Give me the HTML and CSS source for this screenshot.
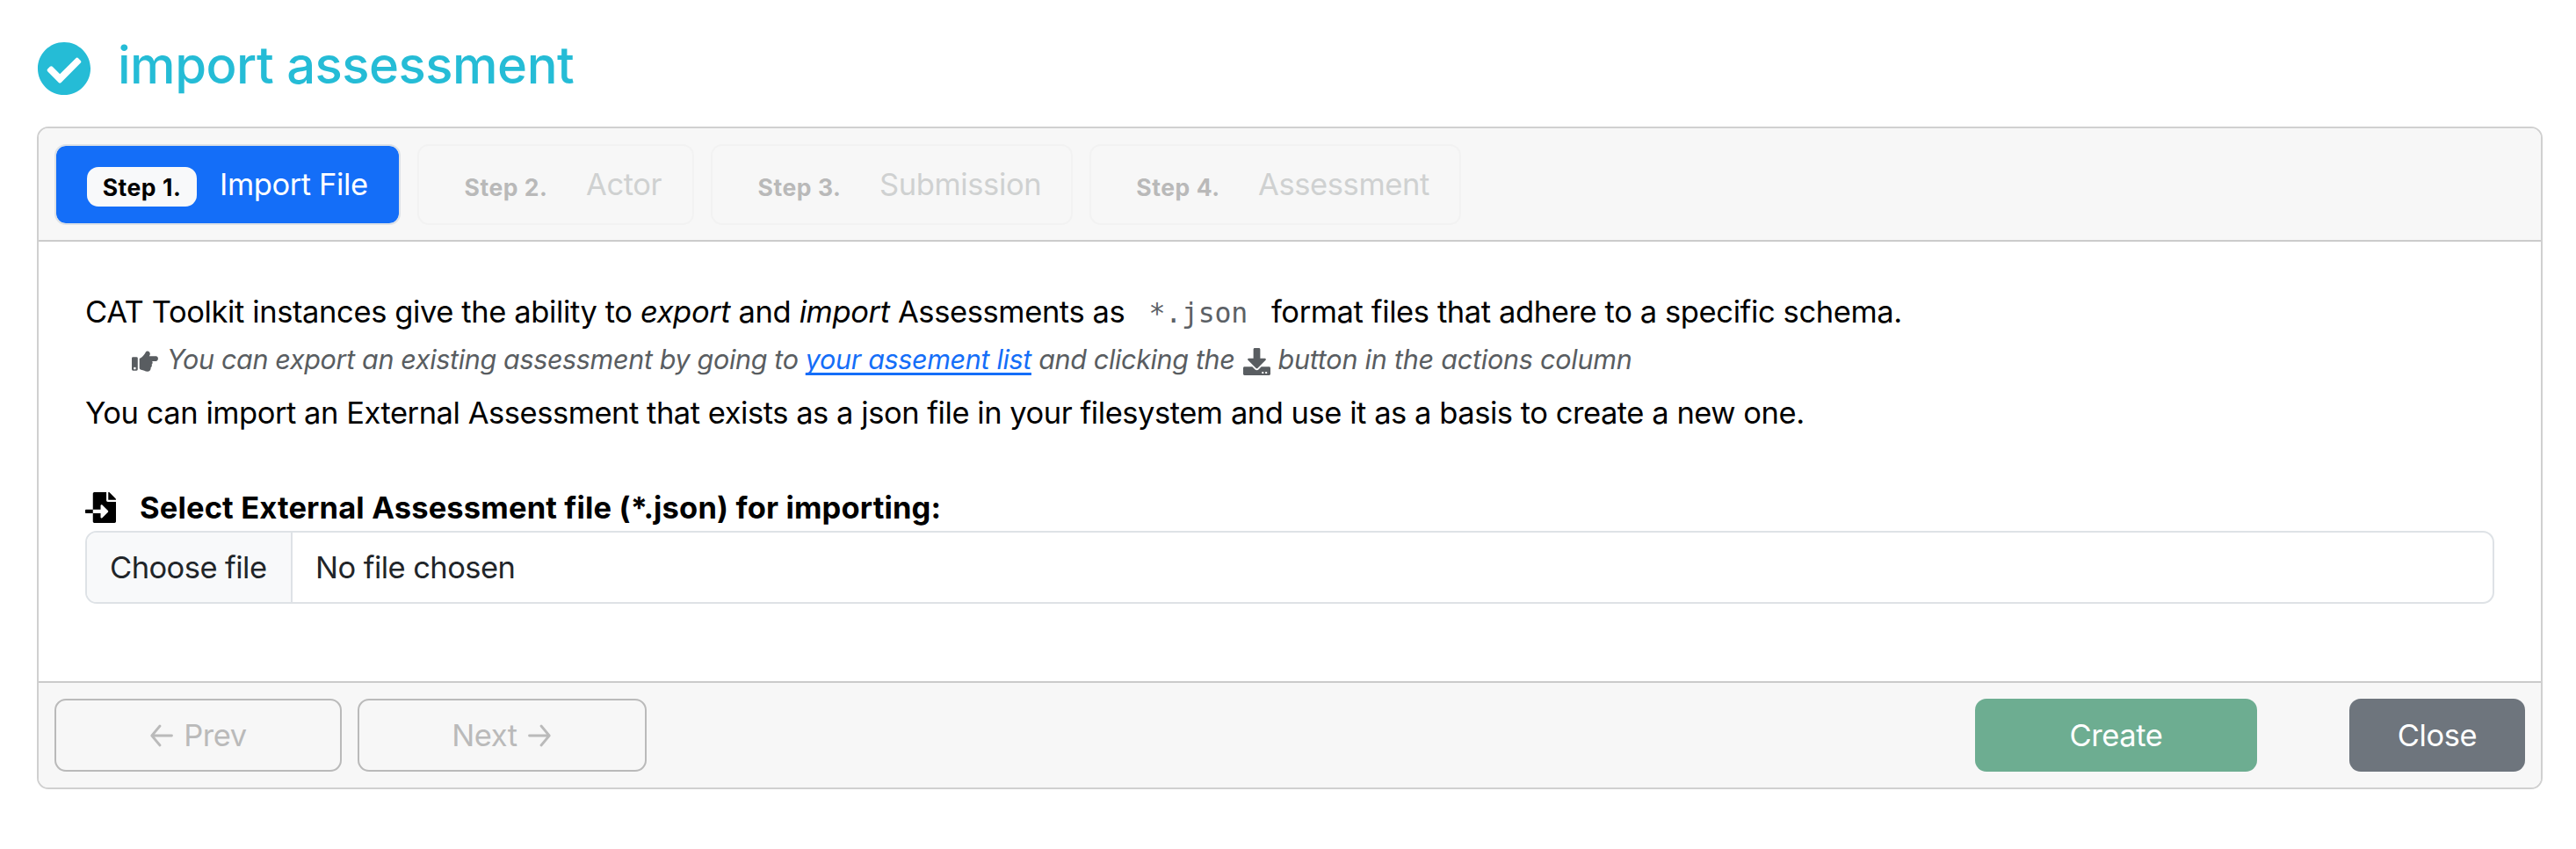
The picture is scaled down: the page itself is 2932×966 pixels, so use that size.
FILE: index.html
```html
<!DOCTYPE html>
<html lang="en">
<head>
<meta charset="utf-8">
<title>Import assessment</title>
<link rel="stylesheet" href="styles.css">
</head>
<body>
<main class="page">
  <h1 class="title">
    <svg class="title-icon" viewBox="0 0 512 512"><path fill="currentColor" d="M504 256c0 136.967-111.033 248-248 248S8 392.967 8 256 119.033 8 256 8s248 111.033 248 248zM227.314 387.314l184-184c6.248-6.248 6.248-16.379 0-22.627l-22.627-22.627c-6.248-6.249-16.379-6.249-22.628 0L216 308.118l-70.059-70.059c-6.248-6.248-16.379-6.248-22.628 0l-22.627 22.627c-6.248 6.248-6.248 16.379 0 22.627l104 104c6.249 6.249 16.379 6.249 22.628.001z"/></svg>
    <span class="title-text">import assessment</span>
  </h1>
  <section class="card">
    <nav class="card-header">
      <div class="tab tab-1 active"><span class="badge">Step 1.</span><span class="tab-name">Import File</span></div>
      <div class="tab tab-2"><span class="badge">Step 2.</span><span class="tab-name">Actor</span></div>
      <div class="tab tab-3"><span class="badge">Step 3.</span><span class="tab-name">Submission</span></div>
      <div class="tab tab-4"><span class="badge">Step 4.</span><span class="tab-name">Assessment</span></div>
    </nav>
    <div class="card-body">
      <p class="line"><span>CAT Toolkit instances give the ability to <em>export</em> and <em>import</em> Assessments as</span><code class="code">*.json</code><span>format files that adhere to a specific schema.</span></p>
      <p class="hint">
        <svg class="hand-icon" viewBox="0 0 512 384"><path fill="currentColor" fill-rule="evenodd" d="M24 112h64a24 24 0 0 1 24 24v208a24 24 0 0 1-24 24H24a24 24 0 0 1-24-24V136a24 24 0 0 1 24-24zm32 192a22 22 0 1 0 0 44 22 22 0 0 0 0-44zM144 142c34-12 62-42 88-75 24-31 32-67 62-67 31 0 50 22 50 55 0 14-7 28-18 43h137a49 49 0 0 1 0 92h-80c14 20 10 50-9 65 10 22 2 46-17 58 6 36-16 71-56 71-58 0-75-28-125-32-18-1-32-12-32-30z"/></svg>
        <span>You can export an existing assessment by going to <a class="link" href="#">your assement list</a> and clicking the</span>
        <svg class="download-icon" viewBox="0 0 512 512"><path fill="currentColor" d="M216 0h80c13.300 0 24 10.700 24 24v168h87.700c17.800 0 26.700 21.500 14.100 34.100L269.700 378.300c-7.500 7.500-19.800 7.500-27.300 0L90.100 226.100c-12.600-12.600-3.700-34.100 14.100-34.100H192V24c0-13.300 10.700-24 24-24zm296 376v112c0 13.300-10.700 24-24 24H24c-13.300 0-24-10.700-24-24V376c0-13.300 10.700-24 24-24h146.700l49 49c20.100 20.100 52.500 20.100 72.600 0l49-49H488c13.300 0 24 10.700 24 24zm-124 88c0-11-9-20-20-20s-20 9-20 20 9 20 20 20 20-9 20-20zm64 0c0-11-9-20-20-20s-20 9-20 20 9 20 20 20 20-9 20-20z"/></svg>
        <span class="hint-end">button in the actions column</span>
      </p>
      <p class="line line-last">You can import an External Assessment that exists as a json file in your filesystem and use it as a basis to create a new one.</p>
      <div class="label">
        <svg class="import-icon" viewBox="0 0 512 512"><path fill="currentColor" d="M16 288c-8.800 0-16 7.200-16 16v32c0 8.800 7.200 16 16 16h112v-64zm489-183L407.100 7c-4.500-4.500-10.600-7-17-7H384v128h128v-6.100c0-6.300-2.500-12.400-7-16.900zm-153 31V0H152c-13.300 0-24 10.700-24 24v264h128v-65.200c0-14.300 17.300-21.400 27.400-11.300L379 308c6.600 6.700 6.600 17.400 0 24l-95.700 96.400c-10.100 10.100-27.400 3-27.400-11.300V352H128v136c0 13.300 10.700 24 24 24h336c13.300 0 24-10.700 24-24V160H376c-13.200 0-24-10.800-24-24z"/></svg>
        <span>Select External Assessment file (*.json) for importing:</span>
      </div>
      <div class="file"><span class="file-button">Choose file</span><span class="file-name">No file chosen</span></div>
    </div>
    <footer class="card-footer">
      <button class="btn btn-prev"><svg class="arrow" viewBox="0 0 26 28"><path d="M24.500 14H2M11 3 1.800 14 11 25"/></svg><span>Prev</span></button>
      <button class="btn btn-next"><span>Next</span><svg class="arrow" viewBox="0 0 26 28"><path d="M1.500 14H24M15 3l9.200 11L15 25"/></svg></button>
      <button class="btn btn-create">Create</button>
      <button class="btn btn-close">Close</button>
    </footer>
  </section>
</main>
</body>
</html>
```
FILE: styles.css
```css
* { box-sizing: border-box; }
body {
  margin: 0;
  background: #fff;
  color: #000;
  font-family: Inter, "Liberation Sans", sans-serif;
  font-size: 34.500px;
  line-height: 54px;
  letter-spacing: -0.390px;
  white-space: nowrap;
}
.page { padding: 44px 38px 0 42px; }
.title {
  display: flex;
  align-items: center;
  height: 64px;
  margin: 0 0 36px;
  color: #25bcd6;
  font-size: 58px;
  font-weight: 500;
  line-height: 64px;
}
.title-icon { width: 62px; height: 62px; margin: 4px 30px 0 0; }
.title-text { letter-spacing: -0.500px; margin-top: -5px; }
.card {
  height: 754px;
  display: flex;
  flex-direction: column;
  border: 2px solid #d0d0d0;
  border-radius: 13px;
  overflow: hidden;
}
.card-header {
  display: flex;
  height: 129px;
  padding: 18px;
  background: #f7f7f7;
  border-bottom: 2px solid #cbcbcb;
}
.tab {
  display: flex;
  height: 92px;
  padding-left: 35px;
  border: 2px solid #f2f2f2;
  border-radius: 13px;
  color: #cfd1d1;
  margin-right: 19px;
}
.tab.active {
  background: #146ef8;
  background-clip: padding-box;
  border-color: #dee2e6;
  color: #fff;
}
.tab-1 { width: 394px; }
.tab-2 { width: 315px; }
.tab-3 { width: 412px; }
.tab-4 { width: 423px; }
.badge {
  width: 125px;
  height: 45px;
  margin: 24px 29px 0 1px;
  padding-left: 1px;
  border-radius: 13px;
  color: #b9b9b9;
  font-size: 26.500px;
  font-weight: 700;
  letter-spacing: 0.550px;
  line-height: 46px;
  text-align: center;
}
.active .badge { margin: 24px 26px 0 0; padding-left: 0; background: #f8f9fa; color: #000; }
.tab-name { margin-top: 17px; }
.card-body { height: 500px; padding: 53px 53px 0; }
.line { display: flex; margin: 0; height: 54px; }
.code {
  margin: 1px 27px 0 27px;
  color: #5c6166;
  font-family: "DejaVu Sans Mono", monospace;
  font-size: 31.500px;
  letter-spacing: -0.200px;
}
.hint {
  display: flex;
  align-items: center;
  height: 54px;
  margin: 0;
  padding-left: 53px;
  color: #595d61;
  font-size: 30.500px;
  font-style: italic;
  letter-spacing: -0.340px;
}
.hint-end { letter-spacing: -0.220px; }
.hand-icon { width: 31px; height: 24px; margin: 4px 9px 0 0; }
.download-icon { width: 31px; height: 31px; margin: 4px 9px 0 9px; }
.link { color: #146ef8; text-underline-offset: 4px; text-decoration-thickness: 3px; text-decoration-skip-ink: none; }
.line-last { margin-top: 7px; letter-spacing: -0.460px; }
.label { display: flex; align-items: center; height: 53px; margin-top: 54px; font-weight: 700; letter-spacing: 0.150px; }
.import-icon { width: 35px; height: 35px; margin-right: 27px; }
.file {
  display: flex;
  height: 83px;
  border: 2px solid #dee2e6;
  border-radius: 13px;
  color: #212529;
  letter-spacing: -0.560px;
  line-height: 79px;
  overflow: hidden;
}
.file-button { width: 234px; padding-left: 26px; background: #f8f9fa; border-right: 2px solid #dee2e6; }
.file-name { padding-left: 26px; }
.card-footer {
  display: flex;
  height: 121px;
  padding: 18px;
  background: #f7f7f7;
  border-top: 2px solid #cbcbcb;
}
.btn {
  display: flex;
  align-items: center;
  justify-content: center;
  gap: 12px;
  height: 83px;
  padding: 0;
  border: 0;
  border-radius: 13px;
  color: #fff;
  font: inherit;
  letter-spacing: -0.400px;
}
.btn-prev, .btn-next { border: 2px solid #bababa; background: transparent; color: #bababa; }
.btn-prev { width: 327px; padding-left: 1px; }
.btn-next { width: 329px; margin-left: 18px; padding-right: 2px; }
.btn-create { width: 321px; margin-left: auto; background: #6dad91; }
.btn-close { width: 200px; margin-left: 105px; background: #6e757d; }
.arrow { width: 26px; height: 28px; fill: none; stroke: currentColor; stroke-width: 2.800; stroke-linecap: round; stroke-linejoin: round; }
```
